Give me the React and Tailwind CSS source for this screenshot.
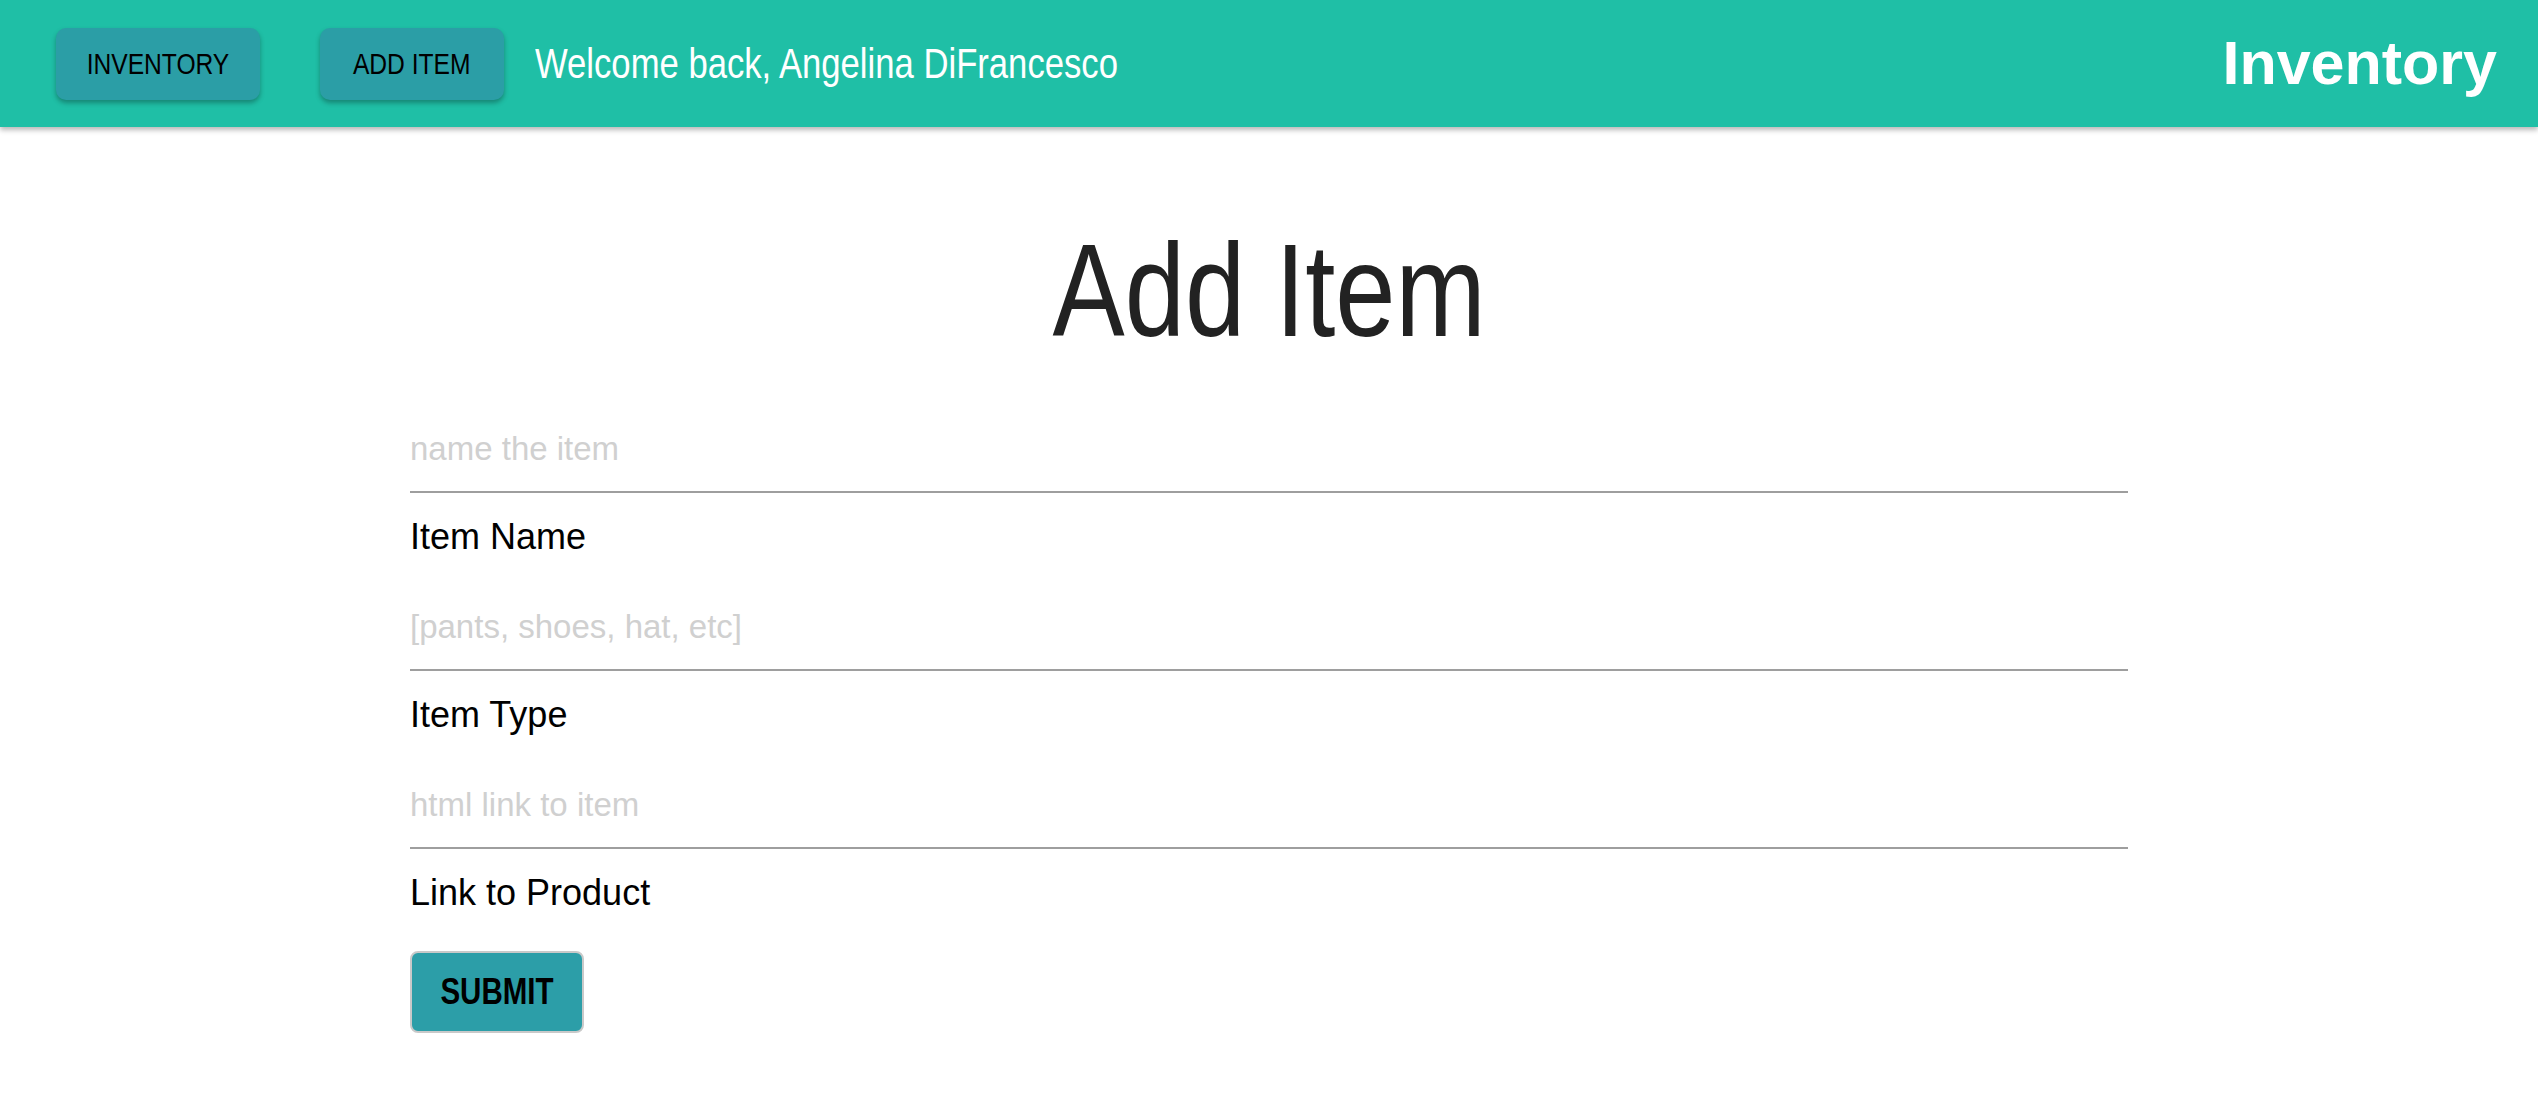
import React, { useState } from 'react';

// no condensed face is installed, so the narrow type is Liberation Sans squeezed horizontally
const squeeze = 'inline-block scale-x-[0.82]';

const fields = [
  { placeholder: 'name the item', label: 'Item Name' },
  { placeholder: '[pants, shoes, hat, etc]', label: 'Item Type' },
  { placeholder: 'html link to item', label: 'Link to Product' },
];

const NavButton = ({ children, className }) => (
  <button
    className={`h-[72px] flex items-center justify-center rounded-[10px] bg-[#2b9ea6] text-black text-[30px] shadow-[0_3px_5px_rgba(0,0,0,0.3)] ${className}`}
  >
    <span className={`${squeeze} whitespace-nowrap`}>{children}</span>
  </button>
);

const App = () => {
  const [values, setValues] = useState(['', '', '']);

  const handleChange = (i, v) => {
    const next = [...values];
    next[i] = v;
    setValues(next);
  };

  return (
    <div className="min-h-screen bg-white [font-family:'Liberation_Sans',Arial,sans-serif]">
      {/* Top bar */}
      <header className="h-[127px] bg-[#1fbfa6] flex items-center shadow-[0_3px_5px_rgba(0,0,0,0.28)]">
        <NavButton className="ml-[56px] w-[204px]">INVENTORY</NavButton>
        <NavButton className="ml-[60px] w-[184px]">ADD ITEM</NavButton>
        <span className="ml-[31px] inline-block origin-left scale-x-[0.825] whitespace-nowrap text-white text-[42px]">
          Welcome back, Angelina DiFrancesco
        </span>
        <h2 className="ml-auto mr-[41px] text-white text-[61px] font-bold">Inventory</h2>
      </header>

      {/* Form */}
      <div className="mt-[98px] text-center">
        <h1 className={`${squeeze} text-[132px] leading-none text-[#222]`}>Add Item</h1>
      </div>

      <form className="w-[1718px] mx-auto mt-[50px]" onSubmit={(e) => e.preventDefault()}>
        {fields.map((f, i) => (
          <div key={f.label} className="mb-[28px]">
            <input
              type="text"
              value={values[i]}
              onChange={(e) => handleChange(i, e.target.value)}
              placeholder={f.placeholder}
              className="block w-full h-[86px] border-b-2 border-[#9e9e9e] bg-transparent outline-none text-[33px] text-black placeholder:text-[#d0d0d0]"
            />
            <label className="block mt-[23px] text-[36px] leading-[41px] text-black">{f.label}</label>
          </div>
        ))}
        <button
          type="submit"
          className="mt-[38px] w-[174px] h-[82px] flex items-center justify-center rounded-[8px] border-2 border-[#c9c9c9] bg-[#2c9ea8] text-black text-[36px] font-bold"
        >
          <span className={squeeze}>SUBMIT</span>
        </button>
      </form>
    </div>
  );
};

export default App;
